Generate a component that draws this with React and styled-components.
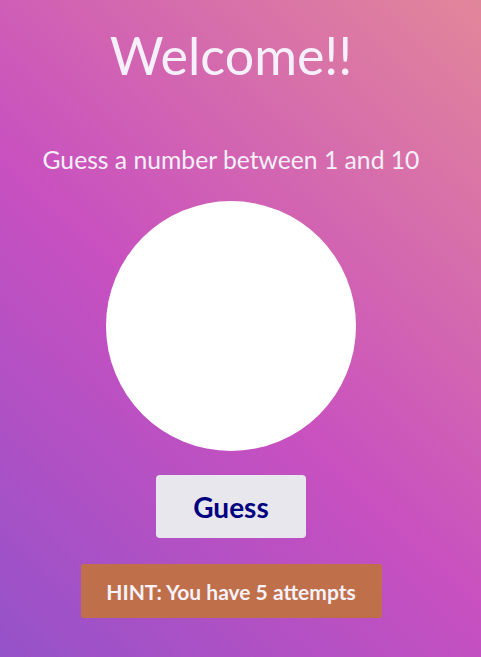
import React from "react";
import styled, { createGlobalStyle } from "styled-components";

const Global = createGlobalStyle`
  html, body { margin: 0; padding: 0; }
  body {
    min-height: 100vh;
    font-family: Lato, "Open Sans", sans-serif;
    background: linear-gradient(43deg, #9552c9 0%, #c850c0 45%, #e2869a 100%);
    background-attachment: fixed;
  }
`;

const Page = styled.main`
  width: calc(100% - 19px);
  min-height: 657px;
  display: flex;
  flex-direction: column;
  align-items: center;
  padding-top: 20px;
  box-sizing: border-box;
`;

const Title = styled.h1`
  margin: 0;
  font-size: 52px;
  font-weight: 400;
  color: #f6f0fb;
  line-height: 70px;
`;

const Subtitle = styled.p`
  margin: 55px 0 0;
  font-size: 24.7px;
  color: #f6f0fb;
  line-height: 30px;
`;

const Circle = styled.div`
  margin-top: 26px;
  width: 250px;
  height: 250px;
  border-radius: 50%;
  background: #ffffff;
`;

const GuessButton = styled.button`
  margin-top: 24px;
  width: 150px;
  height: 63px;
  border: none;
  border-radius: 4px;
  background: #e8e7ee;
  color: #000080;
  font-family: Lato, sans-serif;
  font-weight: 700;
  font-size: 28px;
  cursor: pointer;
`;

const Hint = styled.div`
  margin-top: 26px;
  width: 301px;
  height: 54px;
  display: flex;
  align-items: center;
  justify-content: center;
  background: #bf6f4a;
  border-radius: 2px;
  color: #f8f2fa;
  font-weight: 700;
  font-size: 21px;
`;

export default function App() {
  return (
    <>
      <Global />
      <Page>
        <Title>Welcome!!</Title>
        <Subtitle>Guess a number between 1 and 10</Subtitle>
        <Circle />
        <GuessButton>Guess</GuessButton>
        <Hint>HINT: You have 5 attempts</Hint>
      </Page>
    </>
  );
}
